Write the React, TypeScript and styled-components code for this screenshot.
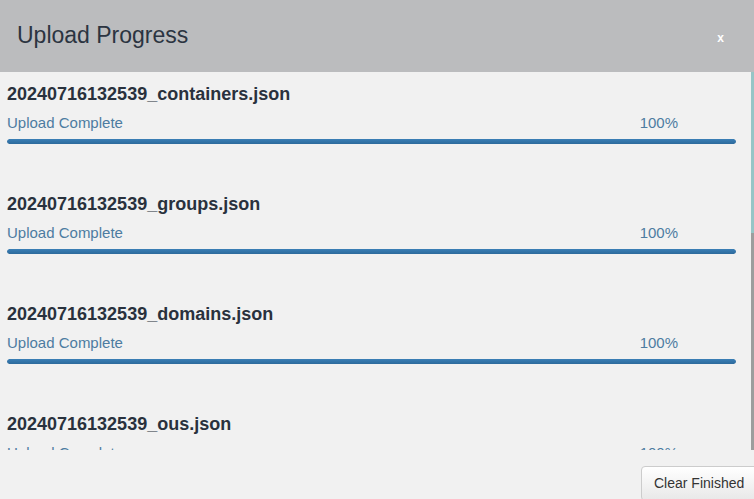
import React from "react";
import styled, { createGlobalStyle } from "styled-components";

const files = [
    "20240716132539_containers.json",
    "20240716132539_groups.json",
    "20240716132539_domains.json",
    "20240716132539_ous.json",
    "20240716132539_users.json",
    "20240716132539_computers.json",
    "20240716132539_gpos.json",
    "20240716132539_cas.json",
];

const GlobalStyle = createGlobalStyle`
    html, body {
        margin: 0;
        padding: 0;
        background: #f1f1f1;
        font-family: "Liberation Sans", Arial, sans-serif;
    }
`;

export default function App() {
    return (
        <>
            <GlobalStyle />
            <Modal>
                <Header>
                    <Title>Upload Progress</Title>
                    <CloseButton>x</CloseButton>
                </Header>
                <ScrollFrame>
                    <ScrollArea>
                        {files.map((file) => (
                            <UploadItem key={file}>
                                <FileName>{file}</FileName>
                                <StatusRow>
                                    <Status>Upload Complete</Status>
                                    <Percent>100%</Percent>
                                </StatusRow>
                                <Track>
                                    <Bar style={{ width: "100%" }} />
                                </Track>
                            </UploadItem>
                        ))}
                    </ScrollArea>
                    <Rail>
                        <Thumb />
                    </Rail>
                </ScrollFrame>
                <Footer>
                    <FooterButton>Clear Finished</FooterButton>
                </Footer>
            </Modal>
        </>
    );
}

const Modal = styled.div`
    display: flex;
    flex-direction: column;
    width: 754px;
    height: 499px;
    overflow: hidden;
    background: #f1f1f1;
`;

const Header = styled.div`
    flex: 0 0 72px;
    display: flex;
    align-items: center;
    justify-content: space-between;
    background: #bbbcbe;
    padding: 0 30px 0 17px;
`;

const Title = styled.h2`
    margin: 0;
    font-size: 23px;
    font-weight: normal;
    color: #2b3441;
    line-height: 1;
    padding-bottom: 2px;
`;

const CloseButton = styled.span`
    color: #ffffff;
    font-size: 12px;
    font-weight: bold;
    padding-top: 4px;
`;

const ScrollFrame = styled.div`
    flex: 0 0 378px;
    display: flex;
    min-height: 0;
`;

const ScrollArea = styled.div`
    flex: 1 1 auto;
    min-width: 0;
    overflow-y: auto;
    overflow-x: hidden;
    scrollbar-width: none;

    &::-webkit-scrollbar {
        display: none;
    }
`;

const Rail = styled.div`
    flex: 0 0 3px;
    display: flex;
    flex-direction: column;
    background: #9d9d9d;
`;

const Thumb = styled.div`
    height: 161px;
    background: #97c5c6;
`;

const UploadItem = styled.div`
    display: flex;
    flex-direction: column;
    padding: 11px 15px 38px 7px;
`;

const FileName = styled.div`
    font-size: 18px;
    font-weight: bold;
    color: #29313d;
    line-height: 22px;
`;

const StatusRow = styled.div`
    display: flex;
    justify-content: space-between;
    margin-top: 8px;
    padding-right: 58px;
    font-size: 15px;
    line-height: 20px;
    color: #4d7ca1;
`;

const Status = styled.span``;

const Percent = styled.span``;

const Track = styled.div`
    margin-top: 6px;
    height: 5px;
    border-radius: 3px;
    background: #dcdcdc;
    overflow: hidden;
`;

const Bar = styled.div`
    height: 100%;
    background: linear-gradient(#3a7fb6, #2d6a9c);
    border-radius: 3px;
`;

const Footer = styled.div`
    flex: 1 1 auto;
    min-width: 0;
    display: flex;
    align-items: flex-start;
    padding: 16px 0 0 641px;
    overflow: hidden;
`;

const FooterButton = styled.button`
    flex: 0 0 auto;
    font-family: "Liberation Sans", Arial, sans-serif;
    font-size: 14px;
    color: #333333;
    white-space: nowrap;
    padding: 8px 12px 9px;
    border: 1px solid #cccccc;
    border-radius: 4px;
    background: linear-gradient(#ffffff, #e8e8e8);
    width: 130px;
    text-align: left;
`;
